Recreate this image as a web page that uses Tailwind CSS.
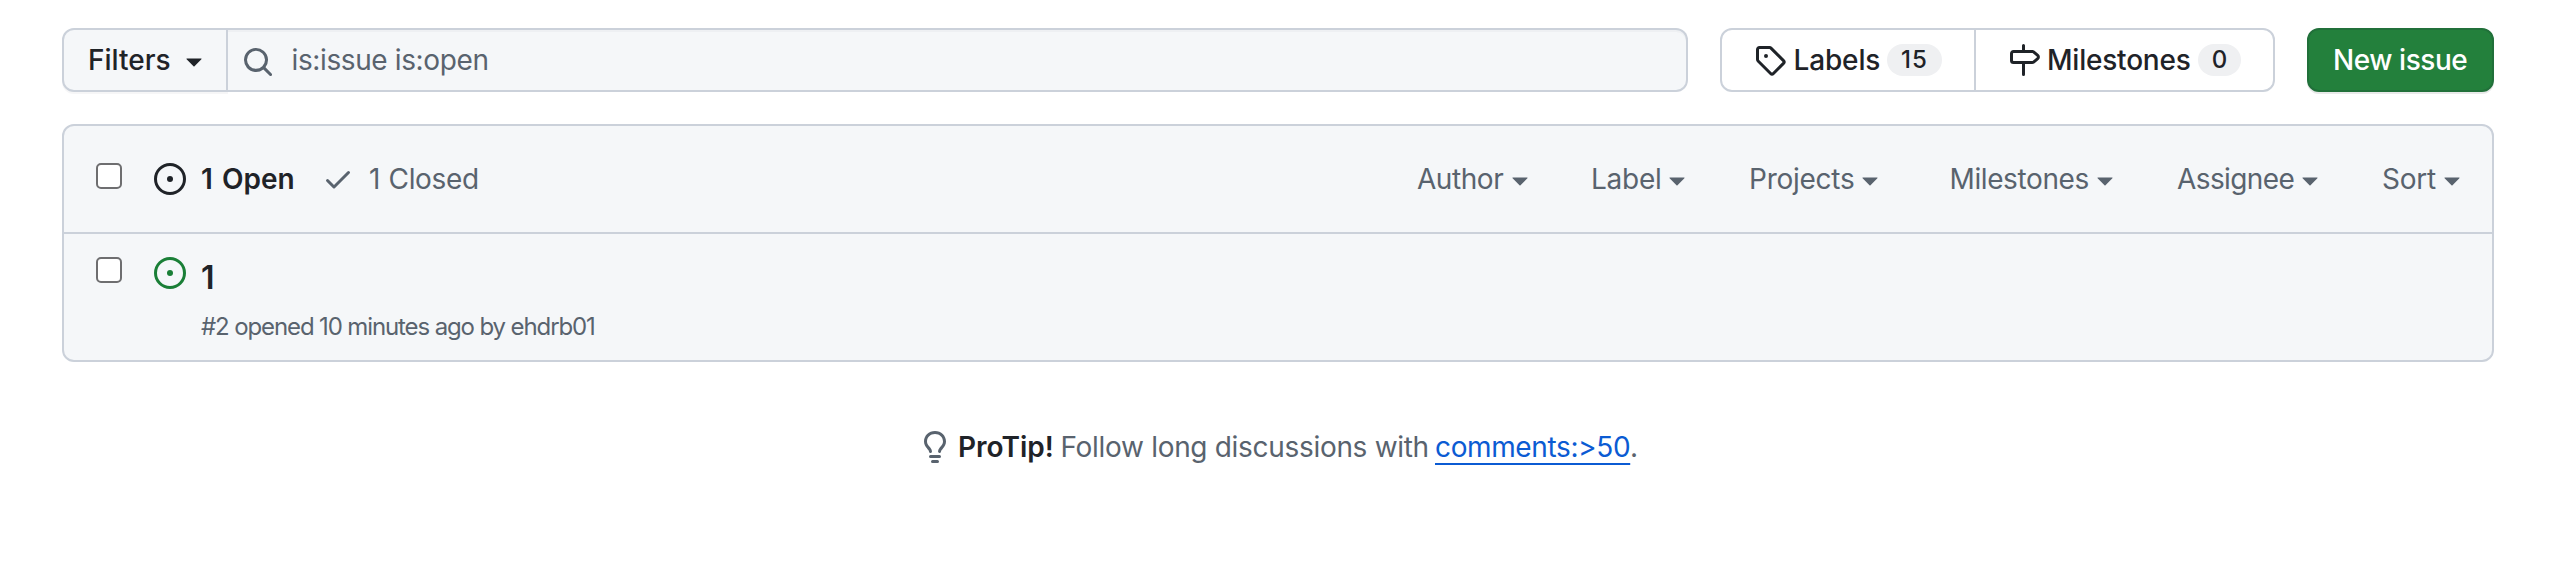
<!DOCTYPE html>
<html lang="en">
<head>
<meta charset="utf-8">
<title>Issues</title>
<script src="https://cdn.jsdelivr.net/npm/@tailwindcss/browser@4"></script>
</head>
<body class="bg-white font-['Inter',sans-serif] text-[28px] leading-[42px] text-[#1f2328] whitespace-nowrap">
<svg class="hidden">
  <symbol id="caret" viewBox="0 0 16 9"><path d="M.9.6h14.2c.4 0 .6.4.3.7L8.5 8.2a.7.7 0 0 1-1 0L.6 1.3C.3 1 .5.6.9.6Z"/></symbol>
  <symbol id="issue" viewBox="0 0 16 16"><path d="M8 9.5a1.5 1.5 0 1 0 0-3 1.5 1.5 0 0 0 0 3Z"/><path d="M8 0a8 8 0 1 1 0 16A8 8 0 0 1 8 0ZM1.5 8a6.5 6.5 0 1 0 13 0 6.5 6.5 0 0 0-13 0Z"/></symbol>
</svg>
<main class="pl-[62px] w-[2494px] pt-7">
  <div class="flex h-16 items-stretch">
    <div class="flex w-[1626px]">
      <button class="flex w-[166px] items-center rounded-l-xl border-2 border-[#cbd1da] bg-[#f5f7f9] pl-6 font-medium shadow-[0_2px_0_rgba(31,35,40,0.04)]">
        <span class="w-[98px] text-left">Filters</span>
        <svg class="mt-[5px] h-[9px] w-4 fill-current"><use href="#caret"/></svg>
      </button>
      <div class="flex flex-1 items-center rounded-r-xl border-2 border-l-0 border-[#cbd1da] bg-[#f5f7f9] pl-4 text-[#59636e] shadow-[inset_0_2px_0_rgba(208,215,222,0.2)]">
        <svg class="mt-1 h-7 w-7 fill-[#59636e]" viewBox="1 1 14 14"><path d="M10.68 11.74a6 6 0 0 1-7.922-8.982 6 6 0 0 1 8.982 7.922l3.04 3.04a.749.749 0 0 1-.326 1.275.749.749 0 0 1-.734-.215ZM11.5 7a4.499 4.499 0 1 0-8.997 0A4.499 4.499 0 0 0 11.5 7Z"/></svg>
        <span class="ml-[19.5px] tracking-[-0.38px]">is:issue is:open</span>
      </div>
    </div>
    <div class="ml-8 flex w-[555px] rounded-xl border-2 border-[#cbd1da] font-medium">
      <a class="flex w-[254px] items-center border-r-2 border-[#cbd1da] pl-8">
        <svg class="h-8 w-8 fill-current" viewBox="0 0 16 16"><path d="M1 7.775V2.75C1 1.784 1.784 1 2.75 1h5.025c.464 0 .91.184 1.238.513l6.25 6.25a1.75 1.75 0 0 1 0 2.474l-5.026 5.026a1.75 1.75 0 0 1-2.474 0l-6.25-6.25A1.752 1.752 0 0 1 1 7.775Zm1.5 0c0 .066.026.13.073.177l6.25 6.25a.25.25 0 0 0 .354 0l5.025-5.025a.25.25 0 0 0 0-.354l-6.25-6.25a.25.25 0 0 0-.177-.073H2.75a.25.25 0 0 0-.25.25ZM6 5a1 1 0 1 1 0 2 1 1 0 0 1 0-2Z"/></svg>
        <span class="ml-[7.5px] w-[93.5px] tracking-[-0.15px]">Labels</span>
        <span class="flex h-8 w-[55px] items-center justify-center rounded-full bg-[#eff0f2] text-2xl leading-8 tracking-[1px]">15</span>
      </a>
      <a class="flex flex-1 items-center pl-8">
        <svg class="h-8 w-8 fill-current" viewBox="0 0 16 16"><path d="M7.75 0a.75.75 0 0 1 .75.75V3h3.634c.414 0 .814.147 1.13.414l2.07 1.75a1.75 1.75 0 0 1 0 2.672l-2.07 1.75a1.75 1.75 0 0 1-1.13.414H8.5v5.25a.75.75 0 0 1-1.5 0V10H2.75A1.75 1.75 0 0 1 1 8.25v-3.5C1 3.784 1.784 3 2.75 3H7V.75A.75.75 0 0 1 7.75 0Zm4.384 8.5a.25.25 0 0 0 .161-.06l2.07-1.75a.248.248 0 0 0 0-.38l-2.07-1.75a.25.25 0 0 0-.161-.06H2.75a.25.25 0 0 0-.25.25v3.5c0 .138.112.25.25.25h9.384Z"/></svg>
        <span class="ml-[7px] w-[151px] tracking-[-0.22px]">Milestones</span>
        <span class="flex h-8 w-[43px] items-center justify-center rounded-full bg-[#eff0f2] text-2xl leading-8">0</span>
      </a>
    </div>
    <button class="ml-8 flex w-[187px] items-center rounded-xl border-2 border-[#21703a] bg-[#23803c] pl-6 font-medium tracking-[-0.45px] text-white shadow-[0_2px_0_rgba(31,35,40,0.1)]">New issue</button>
  </div>

  <section class="mt-8 h-[238px] rounded-xl border-2 border-[#cbd1da] bg-[#f5f7f9]">
    <header class="flex h-[108px] items-center border-b-2 border-[#cbd1da] pl-8 text-[#59636e]">
      <span class="-mt-[6px] size-[26px] rounded-[5px] border-2 border-[#6e6e70] bg-white"></span>
      <svg class="ml-8 size-8 fill-[#1f2328]"><use href="#issue"/></svg>
      <span class="ml-[15px] w-[121px] font-semibold [word-spacing:2px] text-[#1f2328]">1 Open</span>
      <svg class="h-8 w-8 fill-current" viewBox="0 0 16 16"><path d="M13.78 4.22a.75.75 0 0 1 0 1.06l-7.25 7.25a.75.75 0 0 1-1.06 0L2.22 9.28a.751.751 0 0 1 .018-1.042.751.751 0 0 1 1.042-.018L6 10.94l6.72-6.72a.75.75 0 0 1 1.06 0Z"/></svg>
      <span class="ml-[15px] w-[1048px] tracking-[-0.35px] [word-spacing:1px]">1 Closed</span>
      <span class="w-[95px] tracking-[-0.45px]">Author</span><svg class="mt-[5px] h-[9px] w-4 fill-current"><use href="#caret"/></svg>
      <span class="ml-[63px] w-[78px] tracking-[-0.26px]">Label</span><svg class="mt-[5px] h-[9px] w-4 fill-current"><use href="#caret"/></svg>
      <span class="ml-16 w-[113px] tracking-[-0.25px]">Projects</span><svg class="mt-[5px] h-[9px] w-4 fill-current"><use href="#caret"/></svg>
      <span class="ml-[71.5px] w-[147.5px] tracking-[-0.39px]">Milestones</span><svg class="mt-[5px] h-[9px] w-4 fill-current"><use href="#caret"/></svg>
      <span class="ml-16 w-[125px] tracking-[-0.6px]">Assignee</span><svg class="mt-[5px] h-[9px] w-4 fill-current"><use href="#caret"/></svg>
      <span class="ml-16 w-[62px] tracking-[-0.24px]">Sort</span><svg class="mt-[5px] h-[9px] w-4 fill-current"><use href="#caret"/></svg>
    </header>
    <article class="flex items-start pl-8">
      <span class="mt-[23px] size-[26px] rounded-[5px] border-2 border-[#6e6e70] bg-white"></span>
      <svg class="mt-[23px] ml-8 size-8 fill-[#1a7f37]"><use href="#issue"/></svg>
      <div class="ml-[15px] pt-[19px]">
        <div class="text-[32px] leading-[50px] font-semibold">1</div>
        <div class="mt-[6px] text-2xl leading-9 tracking-[-1.12px] text-[#59636e]">#2 opened 10 minutes ago by ehdrb01</div>
      </div>
    </article>
  </section>

  <p class="mt-[64px] flex h-[42px] items-center pl-[857px] text-[#59636e]">
    <svg class="h-8 w-8 fill-current" viewBox="0 0 16 16"><path d="M8 1.5c-2.363 0-4 1.69-4 3.75 0 .984.424 1.625.984 2.304l.214.253c.223.264.47.556.673.848.284.411.537.896.621 1.49a.75.75 0 0 1-1.484.211c-.04-.282-.163-.547-.37-.847a8.456 8.456 0 0 0-.542-.68c-.084-.1-.173-.205-.268-.32C3.201 7.75 2.5 6.766 2.5 5.25 2.5 2.31 4.863 0 8 0s5.5 2.31 5.5 5.25c0 1.516-.701 2.5-1.328 3.259-.095.115-.184.22-.268.319-.207.245-.383.453-.541.681-.208.3-.33.565-.37.847a.751.751 0 0 1-1.485-.212c.084-.593.337-1.078.621-1.489.203-.292.45-.584.673-.848.075-.088.147-.173.213-.253.561-.679.985-1.32.985-2.304 0-2.06-1.637-3.75-4-3.75ZM5.75 12h4.5a.75.75 0 0 1 0 1.5h-4.5a.75.75 0 0 1 0-1.5ZM6 15.25a.75.75 0 0 1 .75-.75h2.5a.75.75 0 0 1 0 1.5h-2.5a.75.75 0 0 1-.75-.75Z"/></svg>
    <strong class="ml-[7px] w-[102.5px] font-semibold text-[#1f2328]">ProTip!</strong>
    <span class="w-[374.5px] tracking-[-0.31px]">Follow long discussions with</span>
    <a class="w-[195px] text-[#0b5bd3] tracking-[-0.37px] underline decoration-2 underline-offset-[6px]">comments:&gt;50</a><span>.</span>
  </p>
</main>
</body>
</html>
